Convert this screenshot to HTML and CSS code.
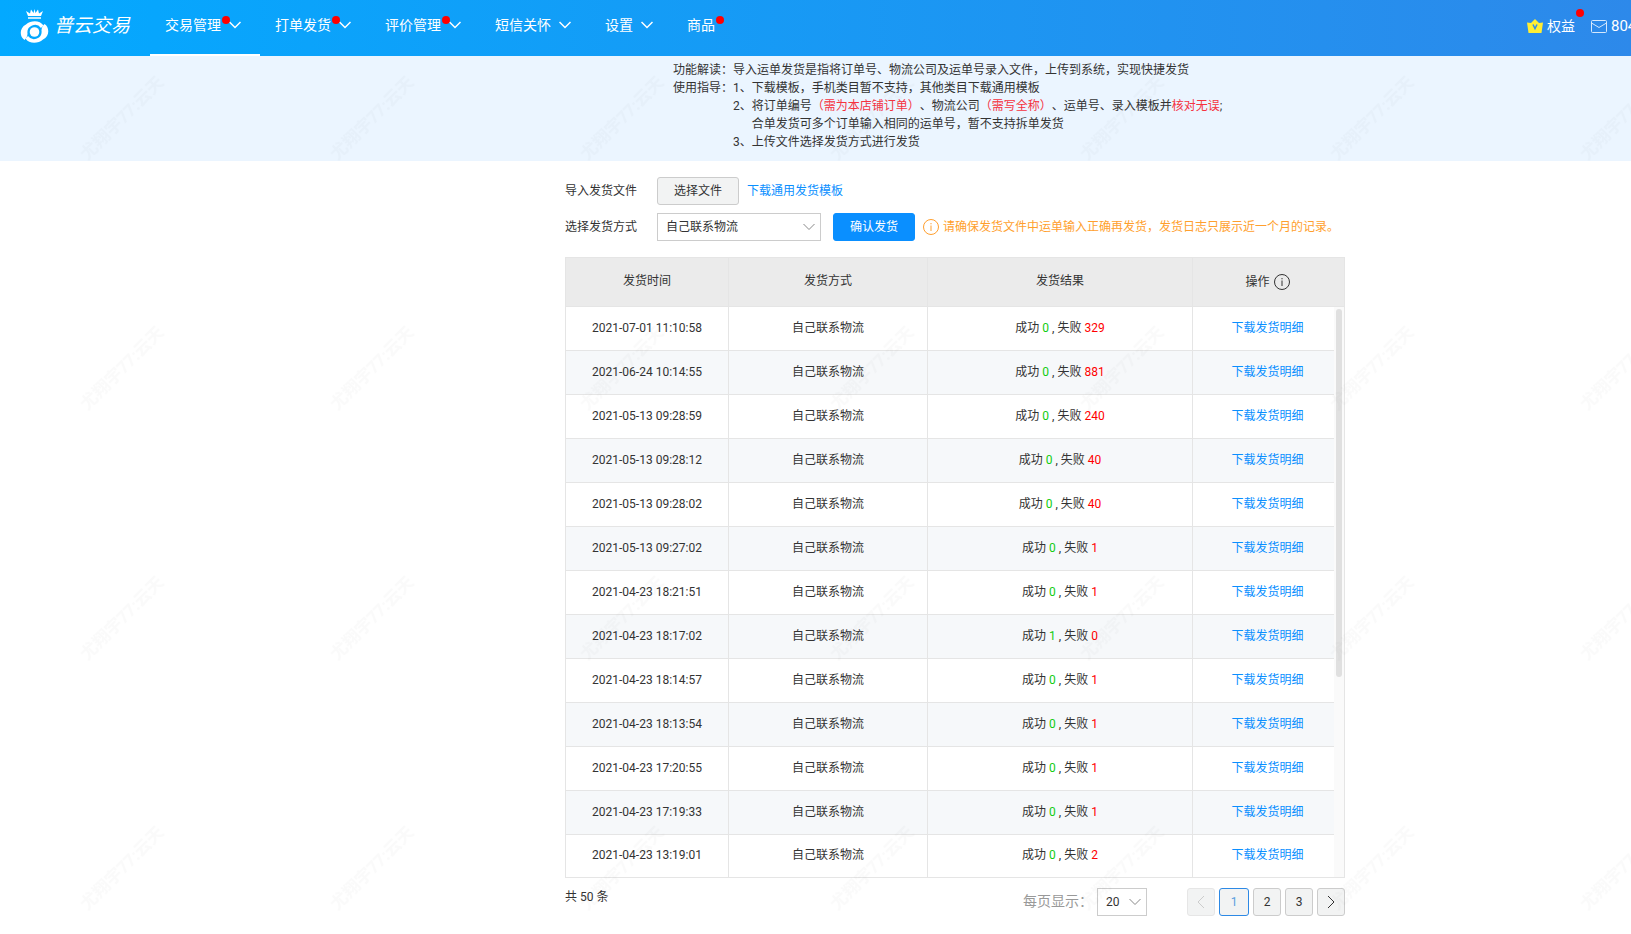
FILE: index.html
```html
<!DOCTYPE html>
<html lang="zh-CN">
<head>
<meta charset="utf-8">
<title>普云交易</title>
<link rel="stylesheet" href="styles.css">
</head>
<body>
<header class="topbar">
  <a class="brand" href="#">
    <svg class="brand-mark" width="30" height="34" viewBox="0 0 30 34" aria-hidden="true">
      <path fill="#fff" d="M8 7L6 2l4 2.500L11 .5 13.500 4 14.500 0l1 4L18 .5l1 4L23 2 21 7z"/>
      <path stroke="#fff" stroke-width="1.500" d="M8 9h13"/>
      <path fill="#fff" d="M4.500 31C-.5 28-1 19 6 15.500 11 11 20 11 23.500 16.500L21 19A7.500 7.500 0 0 0 7.500 24.500C7.500 27 6.500 29 4.500 31z"/>
      <path fill="#fff" transform="rotate(180 14.500 23)" d="M4.500 31C-.5 28-1 19 6 15.500 11 11 20 11 23.500 16.500L21 19A7.500 7.500 0 0 0 7.500 24.500C7.500 27 6.500 29 4.500 31z"/>
      <circle cx="14.500" cy="23" r="4.800" fill="#fff"/>
    </svg>
    <span class="brand-name">普云交易</span>
  </a>
  <nav class="nav">
    <a class="nav-item active" href="#"><span class="dotted">交易管理</span><svg class="chev" viewBox="0 0 12 8"><path d="M.5 1L6 6.500 11.500 1"/></svg></a>
    <a class="nav-item" href="#"><span class="dotted">打单发货</span><svg class="chev" viewBox="0 0 12 8"><path d="M.5 1L6 6.500 11.500 1"/></svg></a>
    <a class="nav-item" href="#"><span class="dotted">评价管理</span><svg class="chev" viewBox="0 0 12 8"><path d="M.5 1L6 6.500 11.500 1"/></svg></a>
    <a class="nav-item" href="#"><span>短信关怀</span><svg class="chev" viewBox="0 0 12 8"><path d="M.5 1L6 6.500 11.500 1"/></svg></a>
    <a class="nav-item" href="#"><span>设置</span><svg class="chev" viewBox="0 0 12 8"><path d="M.5 1L6 6.500 11.500 1"/></svg></a>
    <a class="nav-item" href="#"><span class="dotted">商品</span></a>
  </nav>
  <div class="account">
    <a class="benefit" href="#">
      <svg width="16" height="14" viewBox="0 0 16 14" aria-hidden="true"><path fill="#fe3" d="M0 3.500L4 4 8 0l4 4 4-.5L14.500 14h-13z"/><path d="M6 5.500L8 9.500l2-4" fill="none" stroke="#2b8cee" stroke-width="1.500"/></svg>
      <span>权益</span>
    </a>
    <a class="mail" href="#">
      <svg width="16" height="13" viewBox="0 0 16 13" fill="none" stroke="#d5e8fc" aria-hidden="true"><rect x=".5" y=".5" width="15" height="12" rx="1"/><path d="M.5 3L8 7.500 15.500 3"/></svg>
      <span class="mail-count">804</span>
    </a>
  </div>
</header>

<section class="notice band">
  <dl class="guide">
    <dt>功能解读：</dt>
    <dd>导入运单发货是指将订单号、物流公司及运单号录入文件，上传到系统，实现快捷发货</dd>
    <dt>使用指导：</dt>
    <dd>
      <div class="step"><span>1、</span><p>下载模板，手机类目暂不支持，其他类目下载通用模板</p></div>
      <div class="step"><span>2、</span><p>将订单编号<em>（需为本店铺订单）</em>、物流公司<em>（需写全称）</em>、运单号、录入模板并<em>核对无误</em>;<br>合单发货可多个订单输入相同的运单号，暂不支持拆单发货</p></div>
      <div class="step"><span>3、</span><p>上传文件选择发货方式进行发货</p></div>
    </dd>
  </dl>
</section>

<main class="band">
  <div class="content">
    <form class="form">
      <div class="form-row">
        <label class="form-label" for="file">导入发货文件</label>
        <button class="btn" id="file" type="button">选择文件</button>
        <a class="link template" href="#">下载通用发货模板</a>
      </div>
      <div class="form-row">
        <label class="form-label" for="method">选择发货方式</label>
        <span class="select method"><select id="method"><option>自己联系物流</option></select><svg class="chev" viewBox="0 0 12 8"><path d="M.5 1L6 6.500 11.500 1"/></svg></span>
        <button class="btn primary" type="button">确认发货</button>
        <p class="tip"><svg class="info" viewBox="0 0 16 16" aria-hidden="true"><circle cx="8" cy="8" r="7.500"/><path d="M8 6.500V12M8 4v1.300"/></svg>请确保发货文件中运单输入正确再发货，发货日志只展示近一个月的记录。</p>
      </div>
    </form>

    <div class="table-wrap">
      <table class="log">
        <colgroup><col class="c-time"><col class="c-way"><col class="c-result"><col></colgroup>
        <thead>
          <tr><th>发货时间</th><th>发货方式</th><th>发货结果</th><th><span class="op">操作<svg class="info" viewBox="0 0 16 16" aria-hidden="true"><circle cx="8" cy="8" r="7.500"/><path d="M8 6.500V12M8 4v1.300"/></svg></span></th></tr>
        </thead>
        <tbody>
          <tr><td>2021-07-01 11:10:58</td><td>自己联系物流</td><td>成功 <b class="ok">0</b> , 失败 <b class="bad">329</b></td><td><a class="link" href="#">下载发货明细</a></td></tr>
          <tr><td>2021-06-24 10:14:55</td><td>自己联系物流</td><td>成功 <b class="ok">0</b> , 失败 <b class="bad">881</b></td><td><a class="link" href="#">下载发货明细</a></td></tr>
          <tr><td>2021-05-13 09:28:59</td><td>自己联系物流</td><td>成功 <b class="ok">0</b> , 失败 <b class="bad">240</b></td><td><a class="link" href="#">下载发货明细</a></td></tr>
          <tr><td>2021-05-13 09:28:12</td><td>自己联系物流</td><td>成功 <b class="ok">0</b> , 失败 <b class="bad">40</b></td><td><a class="link" href="#">下载发货明细</a></td></tr>
          <tr><td>2021-05-13 09:28:02</td><td>自己联系物流</td><td>成功 <b class="ok">0</b> , 失败 <b class="bad">40</b></td><td><a class="link" href="#">下载发货明细</a></td></tr>
          <tr><td>2021-05-13 09:27:02</td><td>自己联系物流</td><td>成功 <b class="ok">0</b> , 失败 <b class="bad">1</b></td><td><a class="link" href="#">下载发货明细</a></td></tr>
          <tr><td>2021-04-23 18:21:51</td><td>自己联系物流</td><td>成功 <b class="ok">0</b> , 失败 <b class="bad">1</b></td><td><a class="link" href="#">下载发货明细</a></td></tr>
          <tr><td>2021-04-23 18:17:02</td><td>自己联系物流</td><td>成功 <b class="ok">1</b> , 失败 <b class="bad">0</b></td><td><a class="link" href="#">下载发货明细</a></td></tr>
          <tr><td>2021-04-23 18:14:57</td><td>自己联系物流</td><td>成功 <b class="ok">0</b> , 失败 <b class="bad">1</b></td><td><a class="link" href="#">下载发货明细</a></td></tr>
          <tr><td>2021-04-23 18:13:54</td><td>自己联系物流</td><td>成功 <b class="ok">0</b> , 失败 <b class="bad">1</b></td><td><a class="link" href="#">下载发货明细</a></td></tr>
          <tr><td>2021-04-23 17:20:55</td><td>自己联系物流</td><td>成功 <b class="ok">0</b> , 失败 <b class="bad">1</b></td><td><a class="link" href="#">下载发货明细</a></td></tr>
          <tr><td>2021-04-23 17:19:33</td><td>自己联系物流</td><td>成功 <b class="ok">0</b> , 失败 <b class="bad">1</b></td><td><a class="link" href="#">下载发货明细</a></td></tr>
          <tr><td>2021-04-23 13:19:01</td><td>自己联系物流</td><td>成功 <b class="ok">0</b> , 失败 <b class="bad">2</b></td><td><a class="link" href="#">下载发货明细</a></td></tr>
        </tbody>
      </table>
      <div class="scroll-track"><div class="scroll-thumb"></div></div>
    </div>

    <footer class="pager">
      <span class="total">共 50 条</span>
      <label class="size-label" for="size">每页显示：</label>
      <span class="select size"><select id="size"><option>20</option></select><svg class="chev" viewBox="0 0 12 8"><path d="M.5 1L6 6.500 11.500 1"/></svg></span>
      <nav class="pages">
        <button class="page" type="button" aria-label="上一页" disabled><svg viewBox="0 0 8 14"><path d="M7 1L1 7l6 6"/></svg></button>
        <button class="page current" type="button">1</button>
        <button class="page" type="button">2</button>
        <button class="page" type="button">3</button>
        <button class="page" type="button" aria-label="下一页"><svg viewBox="0 0 8 14"><path d="M1 1l6 6-6 6"/></svg></button>
      </nav>
    </footer>
  </div>
</main>

<svg class="watermark" aria-hidden="true">
  <defs>
    <pattern id="wm" width="250" height="250" patternUnits="userSpaceOnUse">
      <text class="wm-text" transform="translate(122 118) rotate(-45)" text-anchor="middle" dominant-baseline="central">尤翔宇77:云天</text>
    </pattern>
  </defs>
  <rect y="56" width="100%" height="100%" fill="url(#wm)"/>
</svg>
</body>
</html>
```
FILE: styles.css
```css
* { box-sizing: border-box; }

body {
  position: relative;
  min-height: 100vh;
  margin: 0;
  overflow-x: hidden;
  background: #fff;
  color: #333;
  font: 12px/18px Roboto, "Noto Sans CJK SC", sans-serif;
  text-spacing-trim: space-all;
}

p, dl, dd { margin: 0; }
a { color: inherit; text-decoration: none; }
button, select { font: inherit; color: inherit; }
svg { display: block; flex: none; }

.chev {
  width: 12px;
  height: 8px;
  fill: none;
  stroke: currentColor;
}

/* top bar */
.topbar {
  display: flex;
  height: 56px;
  overflow: hidden;
  background: linear-gradient(to right, #03a9ff, #2d89ea);
  color: #fff;
  font-size: 14px;
}

.brand {
  display: flex;
  flex: none;
  align-items: center;
  gap: 4px;
  width: 150px;
  padding: 0 0 4px 20px;
}

.brand-name {
  font-size: 19px;
  font-style: italic;
  font-weight: 400;
  white-space: nowrap;
}

.nav { display: flex; flex: 1; }

.nav-item {
  display: flex;
  align-items: center;
  gap: 8px;
  padding: 0 19px 4px 15px;
  border-bottom: 2px solid transparent;
  white-space: nowrap;
}

.nav-item.active { border-color: #fff; }
.nav-item .chev { stroke-width: 1.5; }

.dotted { position: relative; }

.dotted::after,
.benefit::after {
  content: "";
  position: absolute;
  top: 0;
  right: -9px;
  width: 8px;
  height: 8px;
  border-radius: 50%;
  background: #f00;
}

.account {
  display: flex;
  align-items: center;
  gap: 16px;
  padding-bottom: 4px;
}

.benefit, .mail { display: flex; align-items: center; gap: 4px; }
.benefit { position: relative; white-space: nowrap; }
.benefit::after { top: -8px; }
.mail-count { width: 20px; font-size: 15px; }

/* centre column shared by the notice and the main area */
.band {
  display: grid;
  grid-template-columns: minmax(0, 565fr) 780px minmax(0, 286fr);
}

.band > * { grid-column: 2; }

.notice { background: #ebf5ff; padding: 5px 0 10px; }

.guide {
  display: grid;
  grid-template-columns: 60px 1fr;
  padding-left: 108px;
}

.step { display: flex; white-space: nowrap; }
.guide em { color: #f5333f; font-style: normal; }

/* form */
.form {
  display: flex;
  flex-direction: column;
  gap: 8px;
  padding: 16px 0;
}

.form-row { display: flex; align-items: center; }
.form-label { width: 92px; }

.btn {
  width: 82px;
  height: 28px;
  padding: 0;
  border: 1px solid #ccc;
  border-radius: 3px;
  background: #f2f3f3;
}

.btn.primary {
  margin: 0 8px 0 12px;
  border-color: #0a8fff;
  background: #0a8fff;
  color: #fff;
}

.link { color: #0a8fff; }
.template { margin-left: 8px; }

.select { position: relative; display: block; }

.select select {
  width: 100%;
  height: 28px;
  padding: 0 8px;
  border: 1px solid #ccc;
  border-radius: 0;
  background: #fff;
  appearance: none;
}

.select .chev {
  position: absolute;
  top: 10px;
  right: 6px;
  color: #888;
  pointer-events: none;
}

.method { width: 164px; }
.size { width: 50px; }

.info {
  width: 16px;
  height: 16px;
  fill: none;
  stroke: currentColor;
}

.tip {
  display: flex;
  align-items: center;
  gap: 4px;
  color: #ff9f2e;
  white-space: nowrap;
}

/* log table */
.table-wrap { position: relative; }

.log {
  width: 100%;
  border-collapse: collapse;
  table-layout: fixed;
  text-align: center;
}

.c-time { width: 163px; }
.c-way { width: 199px; }
.c-result { width: 265px; }

.log th, .log td {
  height: 44px;
  padding: 0 0 2px;
  border: 1px solid #e5e5e5;
  font-weight: 400;
}

.log th { height: 49px; background: #ebebeb; }
.log th:last-child { padding: 0 2px 0 0; }
.log td:last-child { padding-right: 2px; }
.log tbody tr:nth-child(even) { background: #f6f8fa; }
.log tbody tr:last-child td { height: 43px; }
.log b { font-weight: 400; }
.ok { color: #1c1; }
.bad { color: #f00; }

.op {
  display: flex;
  align-items: center;
  justify-content: center;
  gap: 4px;
}

.scroll-track {
  position: absolute;
  top: 50px;
  right: 1px;
  bottom: 1px;
  width: 10px;
  padding: 2px;
  background: #fafafa;
}

.scroll-thumb {
  width: 6px;
  height: 65%;
  border-radius: 3px;
  background: #e0e0e0;
}

/* pager */
.pager { display: flex; align-items: center; padding-top: 10px; }
.total { flex: 1; padding-bottom: 10px; }
.size-label { margin-right: 4px; color: #999; font-size: 14px; padding-bottom: 3px; }
.pages { display: flex; gap: 4px; margin-left: 40px; }

.page {
  display: flex;
  align-items: center;
  justify-content: center;
  width: 28px;
  height: 28px;
  padding: 0;
  border: 1px solid #ccc;
  border-radius: 3px;
  background: #f2f3f3;
}

.page svg {
  width: 8px;
  height: 14px;
  fill: none;
  stroke: currentColor;
}

.page:disabled { border-color: #e6e6e6; color: #ccc; }
.page.current { width: 30px; border-color: #2d89e5; color: #5a9fe0; }

/* watermark */
.watermark {
  position: absolute;
  inset: 0;
  width: 100%;
  height: 100%;
  pointer-events: none;
}

.wm-text {
  fill: #000;
  fill-opacity: 0.02;
  font-size: 17px;
  font-weight: 700;
}
```
